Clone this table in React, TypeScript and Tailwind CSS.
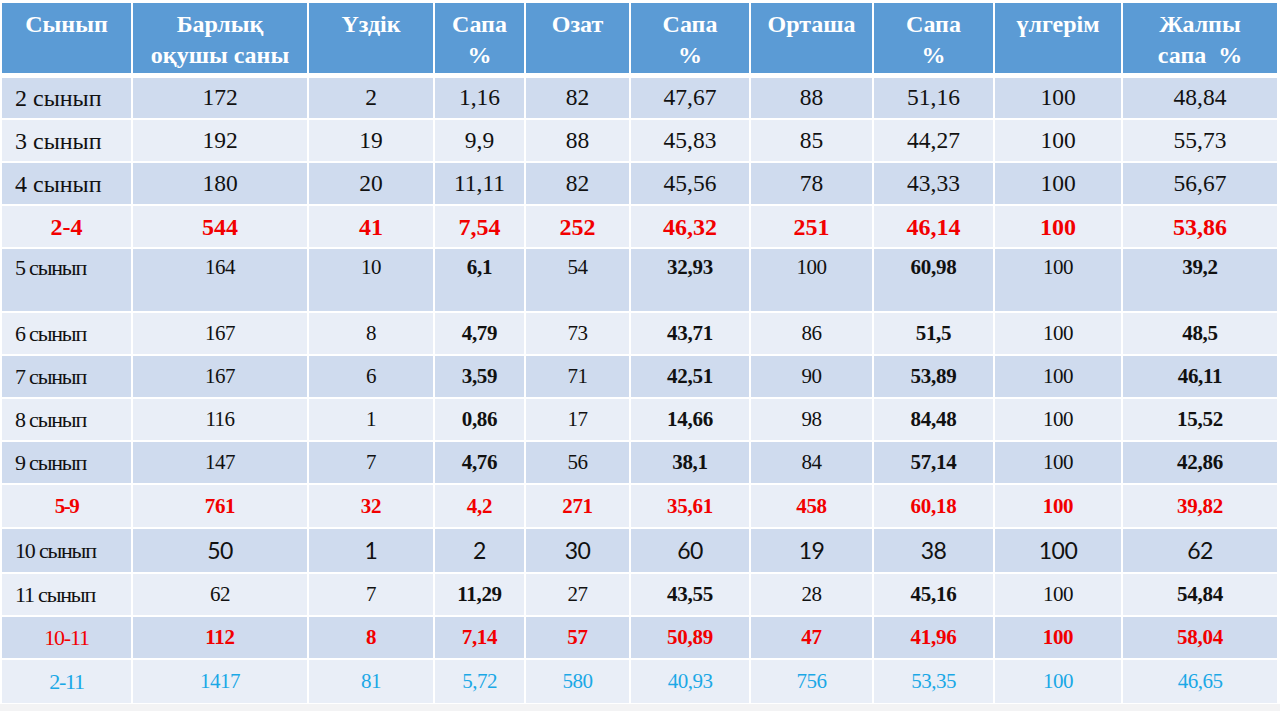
import React from "react";

/**
 * Сынып бойынша сапа кестесі — 2-11 сынып, үлгерім және сапа %.
 */

type Kind = "a" | "r1" | "b" | "r2" | "c" | "r3" | "t";

type Row = {
  kind: Kind;
  cells: string[];
  h: string;
  band: "dark" | "light";
  top?: boolean;
};

const COLS =
  "grid grid-cols-[129px_174px_124px_89px_103px_118px_121px_119px_126px_154px] gap-x-[2px]";

const HEADERS: string[][] = [
  ["Сынып"],
  ["Барлық", "оқушы саны"],
  ["Үздік"],
  ["Сапа", "%"],
  ["Озат"],
  ["Сапа", "%"],
  ["Орташа"],
  ["Сапа", "%"],
  ["үлгерім"],
  ["Жалпы", "сапа\u00a0\u00a0%"],
];

const ROWS: Row[] = [
  { kind: "a", band: "dark", h: "h-[40px]", cells: ["2 сынып", "172", "2", "1,16", "82", "47,67", "88", "51,16", "100", "48,84"] },
  { kind: "a", band: "light", h: "h-[41px]", cells: ["3 сынып", "192", "19", "9,9", "88", "45,83", "85", "44,27", "100", "55,73"] },
  { kind: "a", band: "dark", h: "h-[41px]", cells: ["4 сынып", "180", "20", "11,11", "82", "45,56", "78", "43,33", "100", "56,67"] },
  { kind: "r1", band: "light", h: "h-[41px]", cells: ["2-4", "544", "41", "7,54", "252", "46,32", "251", "46,14", "100", "53,86"] },
  { kind: "b", band: "dark", h: "h-[62px]", top: true, cells: ["5 сынып", "164", "10", "6,1", "54", "32,93", "100", "60,98", "100", "39,2"] },
  { kind: "b", band: "light", h: "h-[41px]", cells: ["6 сынып", "167", "8", "4,79", "73", "43,71", "86", "51,5", "100", "48,5"] },
  { kind: "b", band: "dark", h: "h-[41px]", cells: ["7 сынып", "167", "6", "3,59", "71", "42,51", "90", "53,89", "100", "46,11"] },
  { kind: "b", band: "light", h: "h-[41px]", cells: ["8 сынып", "116", "1", "0,86", "17", "14,66", "98", "84,48", "100", "15,52"] },
  { kind: "b", band: "dark", h: "h-[41px]", cells: ["9 сынып", "147", "7", "4,76", "56", "38,1", "84", "57,14", "100", "42,86"] },
  { kind: "r2", band: "light", h: "h-[42px]", cells: ["5-9", "761", "32", "4,2", "271", "35,61", "458", "60,18", "100", "39,82"] },
  { kind: "c", band: "dark", h: "h-[43px]", cells: ["10 сынып", "50", "1", "2", "30", "60", "19", "38", "100", "62"] },
  { kind: "b", band: "light", h: "h-[41px]", cells: ["11 сынып", "62", "7", "11,29", "27", "43,55", "28", "45,16", "100", "54,84"] },
  { kind: "r3", band: "dark", h: "h-[41px]", cells: ["10-11", "112", "8", "7,14", "57", "50,89", "47", "41,96", "100", "58,04"] },
  { kind: "t", band: "light", h: "h-[43px]", cells: ["2-11", "1417", "81", "5,72", "580", "40,93", "756", "53,35", "100", "46,65"] },
];

// Сапа % бағандары (4, 6, 8, 10) 5-11 сыныптарда қалың
const SAPA = [3, 5, 7, 9];

function firstClass(kind: Kind) {
  switch (kind) {
    case "a":
      return "justify-start pl-[13px] text-[24px] text-[#111]";
    case "r1":
      return "justify-center text-[24px] font-bold text-[#f20000]";
    case "b":
    case "c":
      return "justify-start pl-[13px] text-[22px] tracking-[-1.2px] text-[#111]";
    case "r2":
      return "justify-center text-[21px] font-bold tracking-[-1.5px] text-[#f20000]";
    case "r3":
      return "justify-center text-[22px] tracking-[-1.2px] text-[#f20000]";
    case "t":
      return "justify-center text-[22px] tracking-[-1.2px] text-[#1ba8e6]";
  }
}

function numClass(kind: Kind, i: number) {
  switch (kind) {
    case "a":
      return "text-[23.5px] text-[#111]";
    case "r1":
      return "text-[24px] font-bold text-[#f20000]";
    case "b":
      return SAPA.includes(i)
        ? "text-[21px] font-bold tracking-[-0.3px] text-[#111]"
        : "text-[21px] tracking-[-0.5px] text-[#111]";
    case "c":
      return "font-['Lato',sans-serif] text-[23px] tracking-[-0.5px] text-[#111]";
    case "r2":
    case "r3":
      return "text-[21px] font-bold tracking-[-0.3px] text-[#f20000]";
    case "t":
      return "text-[21px] tracking-[-0.5px] text-[#1ba8e6]";
  }
}

export default function App() {
  return (
    <div className="min-h-screen bg-[#f3f3f4] font-['Liberation_Serif',serif]">
      <div className="bg-white pt-[3px] pl-[2px] pr-[3px] pb-[1px]">
        {/* Header */}
        <div className={`${COLS} h-[70px]`}>
          {HEADERS.map((lines, i) => (
            <div
              key={i}
              className="bg-[#5b9bd5] pt-[6px] text-center text-[24px] font-bold leading-[31px] text-white"
            >
              {lines.map((l, j) => (
                <div key={j}>{l}</div>
              ))}
            </div>
          ))}
        </div>

        {/* Body */}
        <div className="mt-[5px] flex flex-col gap-y-[2px]">
          {ROWS.map((r, ri) => (
            <div key={ri} className={`${COLS} ${r.h}`}>
              {r.cells.map((c, ci) => (
                <div
                  key={ci}
                  className={`flex ${r.top ? "items-start pt-[8px]" : "items-center"} leading-none ${
                    r.band === "dark" ? "bg-[#cfdbee]" : "bg-[#e9eef7]"
                  } ${ci === 0 ? firstClass(r.kind) : `justify-center ${numClass(r.kind, ci)}`}`}
                >
                  <span>{c}</span>
                </div>
              ))}
            </div>
          ))}
        </div>
      </div>
    </div>
  );
}
